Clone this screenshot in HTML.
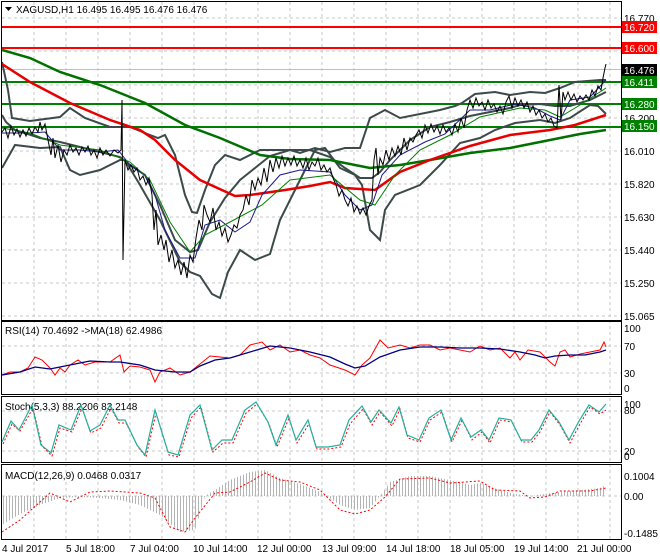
<!DOCTYPE html>
<html><head><meta charset="utf-8"><style>
body{margin:0;background:#fff;width:660px;height:560px;overflow:hidden;font-family:"Liberation Sans",sans-serif}
svg{display:block}
text{font-family:"Liberation Sans",sans-serif;font-size:10px;fill:#000}
</style></head><body>
<svg width="660" height="560" viewBox="0 0 660 560">
<defs>
<pattern id="hb" width="3" height="10" patternUnits="userSpaceOnUse"><rect x="0" y="0" width="1" height="10" fill="#b4b4b4"/></pattern>
<clipPath id="cm"><rect x="2" y="2" width="619" height="318"/></clipPath>
</defs>
<rect width="660" height="560" fill="#fff"/>
<g stroke="#c8c8c8" stroke-dasharray="3,3" stroke-width="1">
<path d="M34 2V539M66 2V539M98 2V539M130 2V539M162 2V539M194 2V539M226 2V539M258 2V539M290 2V539M322 2V539M354 2V539M386 2V539M418 2V539M450 2V539M482 2V539M514 2V539M546 2V539M578 2V539M610 2V539"/>
<path d="M2 18H621M2 51H621M2 85H621M2 118H621M2 151H621M2 184H621M2 217H621M2 250H621M2 283H621M2 316H621"/>
<path d="M2 346H621M2 373H621M2 411H621M2 451H621M2 496H621"/>
</g>
<g fill="none" stroke="#000" stroke-width="1">
<rect x="1.5" y="1.5" width="620" height="319"/>
<rect x="1.5" y="321.5" width="620" height="73"/>
<rect x="1.5" y="396.5" width="620" height="66"/>
<rect x="1.5" y="464.5" width="620" height="75"/>
</g>
<g clip-path="url(#cm)">
<line x1="2" y1="69.5" x2="621" y2="69.5" stroke="#c0c0c0"/>
<line x1="2" y1="27" x2="621" y2="27" stroke="#f00" stroke-width="2"/>
<line x1="2" y1="48" x2="621" y2="48" stroke="#f00" stroke-width="2"/>
<line x1="2" y1="82" x2="621" y2="82" stroke="#008000" stroke-width="2"/>
<line x1="2" y1="104" x2="621" y2="104" stroke="#008000" stroke-width="2"/>
<line x1="2" y1="127" x2="621" y2="127" stroke="#008000" stroke-width="2"/>
<!-- bollinger -->
<polyline fill="none" stroke="#3c4a4a" stroke-width="2" points="2,62 8,90 12,118 30,121 60,117 70,108 85,118 110,127 130,127 150,135 158,138 165,135 175,155 185,195 192,212 197,213 205,190 215,165 225,155 240,160 260,150 275,150 290,150 300,153 315,148 330,152 345,148 360,148 370,118 385,110 400,118 430,112 440,110 455,106 462,103 475,94 495,92 510,95 530,92 545,93 560,88 575,82 600,80 606,80"/>
<polyline fill="none" stroke="#3c4a4a" stroke-width="2" points="2,115 6,122 15,130 40,138 60,142 80,147 100,152 120,157 130,165 145,175 160,205 175,240 190,252 198,250 210,222 225,198 240,180 255,168 270,156 290,150 310,150 330,157 345,168 360,178 372,178 380,172 390,160 410,140 430,127 450,122 470,116 490,112 510,108 520,105 540,104 555,106 570,106 590,100 606,92"/>
<polyline fill="none" stroke="#3c4a4a" stroke-width="2" points="2,168 15,145 40,148 60,147 70,170 80,175 100,170 120,160 125,160 140,185 160,220 180,262 190,272 200,276 212,294 220,298 228,272 240,250 255,260 270,254 280,220 300,180 315,150 325,148 340,168 355,175 362,185 370,230 380,240 385,210 395,195 420,185 440,165 460,143 480,138 495,130 515,123 540,120 555,123 570,118 590,105 598,106 606,114"/>
<!-- MAs -->
<polyline fill="none" stroke="#007000" stroke-width="2.5" points="2,50 30,58 60,72 100,85 145,103 185,125 220,138 260,155 290,159 330,160 370,168 400,165 430,160 470,153 510,148 550,140 580,134 606,130"/>
<polyline fill="none" stroke="#e80000" stroke-width="2.5" points="2,64 30,82 70,103 110,120 140,130 155,140 175,160 200,180 235,196 250,195 285,190 310,186 330,182 345,188 375,190 400,172 430,160 470,146 510,135 550,130 575,125 606,115"/>
<!-- price smoothing lines -->
<polyline fill="none" stroke="#1a1a8c" stroke-width="1" points="2,133 30,133 45,132 60,150 80,150 100,152 118,150 130,165 145,175 155,195 165,230 180,258 195,258 205,225 220,220 235,232 250,222 262,195 280,175 300,170 330,172 345,195 360,210 372,205 382,175 400,155 425,142 445,134 470,110 490,110 515,104 535,108 550,116 560,120 570,100 590,97 606,80"/>
<polyline fill="none" stroke="#008000" stroke-width="1" points="2,128 30,133 60,145 100,150 130,162 150,180 170,222 190,252 205,235 230,222 262,205 290,180 330,175 360,200 375,205 395,175 420,150 450,135 480,117 520,108 545,110 560,117 580,105 606,88"/>
<!-- price bars -->
<polyline fill="none" stroke="#000" stroke-width="1" points="2,132 5,128 8,138 11,126 14,135 17,129 20,137 23,130 26,136 29,128 32,134 35,127 38,132 40,122 42,130 45,124 48,140 51,155 53,138 55,158 58,145 61,162 64,150 67,155 70,145 73,152 76,148 79,155 82,147 85,152 88,146 91,155 94,150 97,158 100,148 103,155 106,150 110,156 114,150 118,153 121,150 122,100 123,260 125,160 128,170 131,165 134,172 137,168 140,180 143,176 146,185 149,178 152,195 154,230 156,210 158,245 161,235 164,250 166,240 169,262 172,250 175,268 178,260 181,275 184,262 187,278 190,255 193,262 196,238 199,220 202,230 204,205 207,215 210,222 213,208 216,230 219,222 222,236 225,228 228,242 231,235 234,225 237,228 240,215 243,210 246,195 249,205 252,180 255,190 258,178 261,185 264,168 267,182 270,160 273,172 276,158 279,168 282,156 285,166 288,158 291,165 294,156 297,166 300,160 303,168 306,158 309,170 312,162 315,166 318,158 321,170 324,165 327,172 330,168 333,178 336,185 339,196 342,190 345,200 348,206 351,198 354,212 357,206 360,214 363,208 366,215 369,206 372,200 374,160 376,148 378,175 380,158 383,165 386,150 389,160 392,148 395,156 398,146 401,155 404,138 407,150 410,138 413,142 416,135 419,130 422,138 425,125 428,133 431,124 434,132 437,126 440,134 443,125 446,132 449,128 452,135 455,124 458,132 461,118 464,128 467,110 470,100 473,108 476,98 479,106 482,102 485,110 488,100 491,108 494,104 497,112 500,106 503,114 506,102 509,96 512,108 515,98 518,106 521,100 524,108 527,102 530,112 533,106 536,115 539,110 542,118 545,114 548,122 551,118 554,126 557,128 559,85 561,120 563,92 565,100 568,92 571,100 574,94 577,102 580,96 583,100 586,95 589,100 592,90 595,96 598,86 601,90 603,78 605,68 606,64"/>
</g>
<text x="624" y="22">16.770</text>
<rect x="622" y="21" width="35" height="12" fill="#f00"/><text x="624" y="31" style="fill:#fff">16.720</text>
<rect x="622" y="42" width="35" height="12" fill="#f00"/><text x="624" y="52" style="fill:#fff">16.600</text>
<rect x="622" y="64" width="35" height="12" fill="#000"/><text x="624" y="74" style="fill:#fff">16.476</text>
<rect x="622" y="76" width="35" height="12" fill="#008000"/><text x="624" y="86" style="fill:#fff">16.411</text>
<rect x="622" y="98" width="35" height="12" fill="#008000"/><text x="624" y="108" style="fill:#fff">16.280</text>
<text x="624" y="122">16.200</text>
<rect x="622" y="120" width="35" height="12" fill="#008000"/><text x="624" y="130" style="fill:#fff">16.150</text>
<text x="624" y="155">16.010</text>
<text x="624" y="188">15.820</text>
<text x="624" y="221">15.630</text>
<text x="624" y="254">15.440</text>
<text x="624" y="287">15.250</text>
<text x="624" y="320">15.065</text>
<path d="M5 7h7l-3.5 4z" fill="#000"/>
<text x="16" y="13">XAGUSD,H1  16.495 16.495 16.476 16.476</text>
<!-- RSI -->
<text x="5" y="334">RSI(14) 70.4692  -&gt;MA(18) 62.4986</text>
<text x="624" y="332">100</text><text x="624" y="350">70</text><text x="624" y="377">30</text><text x="624" y="392">0</text>
<polyline fill="none" stroke="#f00" stroke-width="1" points="2,375 10,372 20,372 28,368 35,357 42,360 50,368 55,375 60,368 65,372 70,365 78,360 85,365 95,362 110,362 120,355 124,372 130,366 140,367 150,370 155,382 160,372 170,368 180,375 190,372 200,364 210,356 220,357 230,358 240,355 250,345 262,342 270,350 280,345 290,352 300,350 310,355 320,358 330,365 345,370 355,375 362,365 370,358 380,340 388,348 400,345 410,348 420,345 430,345 440,350 450,348 460,350 470,352 480,346 490,350 500,348 510,358 515,352 520,360 528,350 540,352 550,362 555,366 560,352 565,350 570,357 580,354 590,352 600,350 604,342 606,347"/>
<polyline fill="none" stroke="#000080" stroke-width="1.3" points="2,375 20,372 35,367 50,369 70,365 90,361 110,362 120,362 140,365 155,370 175,372 190,372 200,366 215,360 230,358 250,352 270,346 290,348 310,352 330,357 345,364 355,368 365,366 380,357 400,350 420,347 440,347 460,348 480,348 500,349 520,352 535,355 545,358 555,356 570,355 585,355 600,352 606,350"/>
<!-- Stoch -->
<text x="5" y="410">Stoch(5,3,3) 88.2206 83.2148</text>
<text x="624" y="408">100</text><text x="624" y="414">80</text><text x="624" y="455">20</text><text x="624" y="460">0</text>
<polyline fill="none" stroke="#f00" stroke-width="1" stroke-dasharray="2,2" points="3,444 12,424 20,431 33,408 42,446 52,456 60,428 72,432 82,408 91,433 101,428 111,408 119,423 126,423 138,447 146,457 156,413 169,455 179,457 191,418 201,407 213,452 223,443 233,443 246,413 257,404 269,424 277,447 289,418 297,443 309,424 317,449 329,449 341,447 350,424 363,409 372,425 380,412 392,426 400,409 408,438 420,442 430,420 442,412 452,442 462,420 472,440 482,432 490,443 500,420 512,422 522,442 532,442 540,432 550,412 560,425 570,443 580,424 590,407 600,414 606,410"/>
<polyline fill="none" stroke="#20b0a0" stroke-width="1.2" points="2,442 11,421 19,430 32,405 41,445 51,453 59,425 71,430 81,405 90,431 100,425 110,405 118,420 125,420 137,445 145,455 155,410 168,452 178,455 190,415 200,405 212,450 222,440 232,440 245,410 256,402 268,422 276,445 288,415 296,440 308,420 316,447 328,447 340,445 349,420 362,406 371,422 379,410 391,423 399,407 407,435 419,440 429,418 441,410 451,440 461,418 471,437 481,430 489,440 499,418 511,420 521,440 531,440 539,430 549,410 559,422 569,440 579,421 589,405 599,412 606,404"/>
<!-- MACD -->
<text x="5" y="479">MACD(12,26,9) 0.0468 0.0317</text>
<text x="624" y="480">0.1004</text><text x="624" y="500">0.00</text><text x="624" y="537">-0.1485</text>
<polygon fill="url(#hb)" points="2,496 2,525 20,514 40,505 60,498 80,497 100,498 120,500 140,505 160,515 180,532 195,530 205,496 215,490 230,480 250,472 265,470 280,478 300,484 320,492 340,505 355,510 370,508 380,496 390,482 410,476 430,476 450,480 470,485 480,483 500,490 515,494 530,496 545,494 560,492 580,490 600,488 606,485 606,496"/>
<polyline fill="none" stroke="#f00" stroke-width="1" stroke-dasharray="2,2" points="2,532 20,520 40,502 50,493 70,502 90,492 110,491 140,493 155,498 170,527 185,532 195,518 215,493 230,492 250,482 265,473 280,480 300,482 320,490 340,510 355,514 370,510 385,497 400,479 430,478 450,483 465,482 480,481 495,490 520,491 530,498 545,497 560,491 590,491 606,488"/>
<text x="2" y="552">4 Jul 2017</text>
<text x="66" y="552">5 Jul 18:00</text>
<text x="130" y="552">7 Jul 04:00</text>
<text x="193" y="552">10 Jul 14:00</text>
<text x="257" y="552">12 Jul 00:00</text>
<text x="322" y="552">13 Jul 09:00</text>
<text x="386" y="552">14 Jul 18:00</text>
<text x="450" y="552">18 Jul 05:00</text>
<text x="514" y="552">19 Jul 14:00</text>
<text x="577" y="552">21 Jul 00:00</text>
</svg>
</body></html>
